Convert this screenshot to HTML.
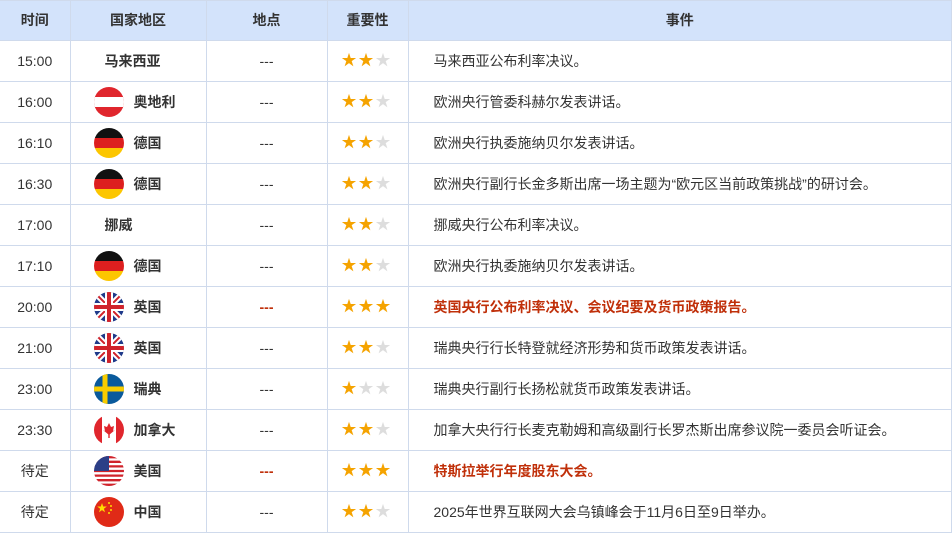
<!DOCTYPE html><html><head><meta charset="utf-8"><style>
body{margin:0;width:952px;height:532px;overflow:hidden;background:#fff;font-family:"Liberation Sans","Noto Sans CJK SC",sans-serif;color:#333}
table{border-collapse:collapse;table-layout:fixed;width:952px}
td,th{border:1px solid #cfdaec;font-size:14px;padding:0;text-align:center;height:40px;line-height:40px;vertical-align:middle;white-space:nowrap;overflow:hidden}
th{background:#d3e3fb;height:39px;line-height:39px;font-weight:bold;font-size:14px;color:#333}
tr td:first-child,tr th:first-child{border-left:none}
td.c{text-align:left;padding-left:23px;font-weight:bold}
td.c svg{vertical-align:middle;margin-right:10px;position:relative;top:-1px}
td.nf{padding-left:34px}
.ev{text-align:left;padding-left:25px}
.red{color:#c0300a;font-weight:bold}
.st{font-size:15px;color:#f5a300;letter-spacing:2px;text-align:left;padding-left:14px}
.st i{font-style:normal;color:#ddd}
</style></head><body>
<svg width="0" height="0" style="position:absolute"><defs>
<clipPath id="cc"><circle cx="15" cy="15" r="15"/></clipPath>
<g id="at"><g clip-path="url(#cc)"><rect width="30" height="30" fill="#e0262d"/><rect y="10" width="30" height="10" fill="#fff"/></g></g>
<g id="de"><g clip-path="url(#cc)"><rect width="30" height="10" fill="#111"/><rect y="10" width="30" height="10" fill="#dd1f1f"/><rect y="20" width="30" height="10" fill="#fcc600"/></g></g>
<g id="gb"><g clip-path="url(#cc)"><rect width="30" height="30" fill="#1f3a8a"/><path d="M0 0L30 30M30 0L0 30" stroke="#fff" stroke-width="6"/><path d="M0 0L30 30M30 0L0 30" stroke="#d0232b" stroke-width="2"/><path d="M15 0V30M0 15H30" stroke="#fff" stroke-width="8"/><path d="M15 0V30M0 15H30" stroke="#d0232b" stroke-width="4"/></g></g>
<g id="se"><g clip-path="url(#cc)"><rect width="30" height="30" fill="#0a5a9c"/><path d="M11 0V30M0 15H30" stroke="#f9cd00" stroke-width="5"/></g></g>
<g id="ca"><g clip-path="url(#cc)"><rect width="30" height="30" fill="#fff"/><rect width="8" height="30" fill="#e0262d"/><rect x="22" width="8" height="30" fill="#e0262d"/><path d="M15 8l2 4 3-1-1 5 2-1-6 5-6-5 2 1-1-5 3 1z" fill="#e0262d"/><rect x="14.3" y="19" width="1.4" height="4" fill="#e0262d"/></g></g>
<g id="us"><g clip-path="url(#cc)"><rect width="30" height="30" fill="#fff"/><path d="M0 1.2H30M0 5.8H30M0 10.4H30M0 15H30M0 19.6H30M0 24.2H30M0 28.8H30" stroke="#d0232b" stroke-width="2.3"/><rect width="15" height="15" fill="#2c3f87"/></g></g>
<g id="cn"><g clip-path="url(#cc)"><rect width="30" height="30" fill="#e02a17"/><path d="M8 6l1.2 3.5h3.6l-2.9 2.2 1.1 3.5-3-2.1-3 2.1 1.1-3.5-2.9-2.2h3.6z" fill="#ffdd00"/><circle cx="15" cy="6" r="1" fill="#ffdd00"/><circle cx="17" cy="9" r="1" fill="#ffdd00"/><circle cx="17" cy="13" r="1" fill="#ffdd00"/><circle cx="15" cy="16" r="1" fill="#ffdd00"/></g></g>
</defs></svg>
<table>
<colgroup><col style="width:70px"><col style="width:136px"><col style="width:121px"><col style="width:81px"><col></colgroup>
<tr><th>时间</th><th>国家地区</th><th>地点</th><th>重要性</th><th>事件</th></tr>
<tr><td>15:00</td><td class="c nf">马来西亚</td><td>---</td><td class="st">★★<i>★</i></td><td class="ev">马来西亚公布利率决议。</td></tr>
<tr><td>16:00</td><td class="c"><svg width="30" height="30"><use href="#at"/></svg>奥地利</td><td>---</td><td class="st">★★<i>★</i></td><td class="ev">欧洲央行管委科赫尔发表讲话。</td></tr>
<tr><td>16:10</td><td class="c"><svg width="30" height="30"><use href="#de"/></svg>德国</td><td>---</td><td class="st">★★<i>★</i></td><td class="ev">欧洲央行执委施纳贝尔发表讲话。</td></tr>
<tr><td>16:30</td><td class="c"><svg width="30" height="30"><use href="#de"/></svg>德国</td><td>---</td><td class="st">★★<i>★</i></td><td class="ev">欧洲央行副行长金多斯出席一场主题为“欧元区当前政策挑战”的研讨会。</td></tr>
<tr><td>17:00</td><td class="c nf">挪威</td><td>---</td><td class="st">★★<i>★</i></td><td class="ev">挪威央行公布利率决议。</td></tr>
<tr><td>17:10</td><td class="c"><svg width="30" height="30"><use href="#de"/></svg>德国</td><td>---</td><td class="st">★★<i>★</i></td><td class="ev">欧洲央行执委施纳贝尔发表讲话。</td></tr>
<tr><td>20:00</td><td class="c"><svg width="30" height="30"><use href="#gb"/></svg>英国</td><td class="red">---</td><td class="st">★★★</td><td class="ev red">英国央行公布利率决议、会议纪要及货币政策报告。</td></tr>
<tr><td>21:00</td><td class="c"><svg width="30" height="30"><use href="#gb"/></svg>英国</td><td>---</td><td class="st">★★<i>★</i></td><td class="ev">瑞典央行行长特登就经济形势和货币政策发表讲话。</td></tr>
<tr><td>23:00</td><td class="c"><svg width="30" height="30"><use href="#se"/></svg>瑞典</td><td>---</td><td class="st">★<i>★★</i></td><td class="ev">瑞典央行副行长扬松就货币政策发表讲话。</td></tr>
<tr><td>23:30</td><td class="c"><svg width="30" height="30"><use href="#ca"/></svg>加拿大</td><td>---</td><td class="st">★★<i>★</i></td><td class="ev">加拿大央行行长麦克勒姆和高级副行长罗杰斯出席参议院一委员会听证会。</td></tr>
<tr><td>待定</td><td class="c"><svg width="30" height="30"><use href="#us"/></svg>美国</td><td class="red">---</td><td class="st">★★★</td><td class="ev red">特斯拉举行年度股东大会。</td></tr>
<tr><td>待定</td><td class="c"><svg width="30" height="30"><use href="#cn"/></svg>中国</td><td>---</td><td class="st">★★<i>★</i></td><td class="ev">2025年世界互联网大会乌镇峰会于11月6日至9日举办。</td></tr>
</table>
</body></html>
